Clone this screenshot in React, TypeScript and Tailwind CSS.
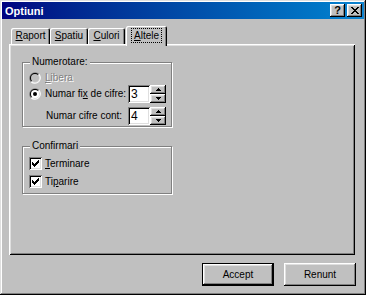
import React from "react";

const raised =
  "shadow-[inset_-1px_-1px_#000,inset_1px_1px_#fff,inset_-2px_-2px_#808080,inset_2px_2px_#dfdfdf]";
const sunken =
  "shadow-[inset_1px_1px_#808080,inset_-1px_-1px_#fff,inset_2px_2px_#000,inset_-2px_-2px_#dfdfdf]";
const tabShadow =
  "shadow-[inset_1px_1px_#fff,inset_-1px_0_#000,inset_-2px_0_#808080]";

function Radio({ checked, disabled }: { checked?: boolean; disabled?: boolean }) {
  return (
    <svg width="12" height="12" viewBox="0 0 12 12" className="shrink-0">
      <path d="M10.24 1.76A6 6 0 0 0 1.76 10.24Z" fill="#808080" />
      <path d="M10.24 1.76A6 6 0 0 1 1.76 10.24Z" fill="#fff" />
      <path d="M9.54 2.46A5 5 0 0 0 2.46 9.54Z" fill="#000" />
      <path d="M9.54 2.46A5 5 0 0 1 2.46 9.54Z" fill="#dfdfdf" />
      <circle cx="6" cy="6" r="4" fill={disabled ? "#c0c0c0" : "#fff"} />
      {checked && <circle cx="6" cy="6" r="2" fill="#000" />}
    </svg>
  );
}

function Check() {
  return (
    <div className={`w-[13px] h-[13px] bg-white shrink-0 ${sunken}`}>
      <svg width="13" height="13" viewBox="0 0 13 13" shapeRendering="crispEdges">
        <path
          d="M3 5h1v3H3z M4 6h1v3H4z M5 7h1v3H5z M6 6h1v3H6z M7 5h1v3H7z M8 4h1v3H8z M9 3h1v3H9z"
          fill="#000"
        />
      </svg>
    </div>
  );
}

function Spin({ value }: { value: string }) {
  return (
    <div className="flex">
      <div className={`w-[22px] h-[18px] bg-white pl-[3px] flex items-center text-[12px] ${sunken}`}>
        {value}
      </div>
      <div className="flex flex-col">
        <div className={`w-[16px] h-[9px] bg-[#c0c0c0] flex items-center justify-center ${raised}`}>
          <svg width="5" height="3" viewBox="0 0 5 3" shapeRendering="crispEdges">
            <path d="M2 0h1v1H2z M1 1h3v1H1z M0 2h5v1H0z" fill="#000" />
          </svg>
        </div>
        <div className={`w-[16px] h-[9px] bg-[#c0c0c0] flex items-center justify-center ${raised}`}>
          <svg width="5" height="3" viewBox="0 0 5 3" shapeRendering="crispEdges">
            <path d="M0 0h5v1H0z M1 1h3v1H1z M2 2h1v1H2z" fill="#000" />
          </svg>
        </div>
      </div>
    </div>
  );
}

function Group({
  label,
  className,
  children,
}: {
  label: string;
  className: string;
  children: React.ReactNode;
}) {
  return (
    <div
      className={`relative w-[150px] border border-[#808080] shadow-[inset_1px_1px_#fff,1px_1px_#fff] ${className}`}
    >
      <span className="absolute left-[7px] top-[-7px] px-[2px] bg-[#c0c0c0]">{label}</span>
      {children}
    </div>
  );
}

export default function App() {
  return (
    <div className="w-[366px] h-[295px] bg-[#c0c0c0] p-[2px] flex flex-col shadow-[inset_-1px_-1px_#000,inset_1px_1px_#dfdfdf,inset_-2px_-2px_#808080,inset_2px_2px_#fff] font-['Liberation_Sans',Arial,sans-serif] text-[10px] leading-[12px] text-black">
      {/* Title bar */}
      <div className="h-[17px] flex items-center justify-between pl-[3px] pr-[2px] bg-linear-to-r from-[#000080] to-[#1084d0]">
        <span className="text-white font-bold text-[11px]">Optiuni</span>
        <div className="flex gap-[2px]">
          <div
            className={`w-[15px] h-[13px] bg-[#c0c0c0] flex items-center justify-center font-bold text-[11px] leading-none ${raised}`}
          >
            ?
          </div>
          <div className={`w-[15px] h-[13px] bg-[#c0c0c0] flex items-center justify-center ${raised}`}>
            <svg width="8" height="7" viewBox="0 0 8 7" shapeRendering="crispEdges">
              <path
                d="M0 0h2v1H0z M6 0h2v1H6z M1 1h2v1H1z M5 1h2v1H5z M2 2h4v1H2z M3 3h2v1H3z M2 4h4v1H2z M1 5h2v1H1z M5 5h2v1H5z M0 6h2v1H0z M6 6h2v1H6z"
                fill="#000"
              />
            </svg>
          </div>
        </div>
      </div>

      {/* Tabs + panel */}
      <div className="ml-[7px] mt-[7px] w-[346px] flex flex-col">
        <div className="h-[18px] flex items-end pl-[2px]">
          <div className={`w-[39px] h-[16px] rounded-t-[2px] flex items-center justify-center ${tabShadow}`}>
            <span><u>R</u>aport</span>
          </div>
          <div className={`w-[38px] h-[16px] rounded-t-[2px] flex items-center justify-center ${tabShadow}`}>
            <span><u>S</u>patiu</span>
          </div>
          <div className={`w-[37px] h-[16px] rounded-t-[2px] flex items-center justify-center ${tabShadow}`}>
            <span><u>C</u>ulori</span>
          </div>
          <div
            className={`relative z-10 ml-[1px] w-[41px] h-[20px] -mb-[2px] bg-[#c0c0c0] rounded-t-[2px] flex justify-center pt-[2px] ${tabShadow}`}
          >
            <span className="h-[15px] px-[2px] border border-dotted border-black flex items-center">
              <span><u>A</u>ltele</span>
            </span>
          </div>
        </div>
        <div className="h-[211px] flex flex-col pl-[13px] pt-[18px] shadow-[inset_1px_1px_#fff,inset_-1px_-1px_#000,inset_2px_2px_#dfdfdf,inset_-2px_-2px_#808080]">
          <Group label="Numerotare:" className="h-[65px] pl-[6px] pt-[8px]">
            <div className="h-[13px] flex items-center gap-[4px]">
              <Radio disabled />
              <span className="text-[#808080] [text-shadow:1px_1px_0_#fff]">
                <u>L</u>ibera
              </span>
            </div>
            <div className="mt-[1px] flex items-center">
              <Radio checked />
              <span className="ml-[4px] w-[83px]">
                Numar fi<u>x</u> de cifre:
              </span>
              <Spin value="3" />
            </div>
            <div className="mt-[4px] flex items-center">
              <span className="ml-[17px] w-[82px]">Numar cifre cont:</span>
              <Spin value="4" />
            </div>
          </Group>
          <Group label="Confirmari" className="mt-[19px] h-[48px] pl-[6px] pt-[10px]">
            <div className="h-[13px] flex items-center gap-[3px]">
              <Check />
              <span>
                <u>T</u>erminare
              </span>
            </div>
            <div className="mt-[5px] h-[13px] flex items-center gap-[3px]">
              <Check />
              <span>
                Ti<u>p</u>arire
              </span>
            </div>
          </Group>
        </div>
      </div>

      {/* Buttons */}
      <div className="mt-[8px] flex justify-end gap-[10px] pr-[8px]">
        <div
          className={`w-[72px] h-[23px] border border-black bg-[#c0c0c0] flex items-center justify-center ${raised}`}
        >
          Accept
        </div>
        <div className={`w-[72px] h-[23px] bg-[#c0c0c0] flex items-center justify-center ${raised}`}>
          Renunt
        </div>
      </div>
    </div>
  );
}
